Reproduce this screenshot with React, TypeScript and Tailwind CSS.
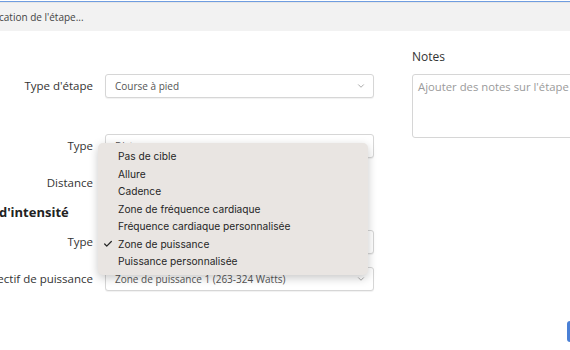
import { Check, ChevronDown } from "lucide-react";

const menuItems = [
  "Pas de cible",
  "Allure",
  "Cadence",
  "Zone de fréquence cardiaque",
  "Fréquence cardiaque personnalisée",
  "Zone de puissance",
  "Puissance personnalisée",
];

function SelectBox({ value }: { value?: string }) {
  return (
    <div className="flex h-[24px] w-[269px] items-center justify-between rounded-[3px] border border-[#d6d6d6] bg-white pl-[9px] pr-[7px] text-[10px] text-[#555] shadow-[0_1px_1px_rgba(0,0,0,0.06)]">
      <span>{value}</span>
      <ChevronDown className="h-[10px] w-[10px] text-[#999]" strokeWidth={2} />
    </div>
  );
}

function Row({ label, children }: { label: string; children: React.ReactNode }) {
  return (
    <div className="flex items-center">
      <div className="flex w-[93px] shrink-0 justify-end whitespace-nowrap text-[11.5px] text-[#333]">
        <span>{label}</span>
      </div>
      <div className="ml-[12px]">{children}</div>
    </div>
  );
}

export default function App() {
  return (
    <div
      className="relative h-[350px] w-[570px] overflow-hidden bg-white"
      style={{ fontFamily: "'Open Sans', sans-serif" }}
    >
      <div className="mt-px border-t border-[#6f9de0]">
        <div className="flex h-[29px] items-center border-t border-[#e6e6e6] bg-[#f2f2f2] text-[10px] text-[#444]">
          <span className="-ml-px">cation de l'étape...</span>
        </div>
      </div>

      <div className="flex">
        <div className="w-[375px] shrink-0">
          <div className="mt-[43px]">
            <Row label="Type d'étape">
              <SelectBox value="Course à pied" />
            </Row>
          </div>
          <div className="mt-[36px]">
            <Row label="Type">
              <SelectBox value="Distance" />
            </Row>
          </div>
          <div className="mt-[13px]">
            <Row label="Distance">
              <div className="h-[24px] w-[240px]" />
            </Row>
          </div>
          <div className="mt-[8px] whitespace-nowrap text-[13px] font-bold leading-[18px] text-[#222]">
            <span className="-ml-[56px]">Objectif d'intensité</span>
          </div>
          <div className="mt-[9px]">
            <Row label="Type">
              <SelectBox value="Zone de puissance" />
            </Row>
          </div>
          <div className="mt-[13px]">
            <Row label="Objectif de puissance">
              <SelectBox value="Zone de puissance 1 (263-324 Watts)" />
            </Row>
          </div>
        </div>

        <div className="ml-[37px] mt-[17px] shrink-0">
          <div className="text-[12px] leading-[18px] text-[#333]">Notes</div>
          <div className="mt-[8px] h-[64px] w-[180px] whitespace-nowrap rounded-[3px] border border-[#d6d6d6] px-[5px] py-[4px] text-[11.3px] text-[#9a9a9a]">
            Ajouter des notes sur l'étape
          </div>
        </div>
      </div>

      <div className="absolute right-[-10px] top-[321px] h-[21px] w-[13px] rounded-[3px] bg-[#4a80d6]" />

      <div
        className="absolute left-[98px] top-[143px] w-[270px] rounded-[5px] bg-[#e9e5e2] pb-[4px] pt-[5px] text-[10.2px] text-[#262626] shadow-[0_3px_10px_rgba(0,0,0,0.22)]"
        style={{ fontFamily: "Inter, 'Liberation Sans', sans-serif" }}
      >
        {menuItems.map((item) => (
          <div key={item} className="relative flex h-[17.5px] items-center pl-[20px]">
            {item === "Zone de puissance" && (
              <Check className="absolute left-[5px] h-[10px] w-[10px]" strokeWidth={3} />
            )}
            {item}
          </div>
        ))}
      </div>
    </div>
  );
}
